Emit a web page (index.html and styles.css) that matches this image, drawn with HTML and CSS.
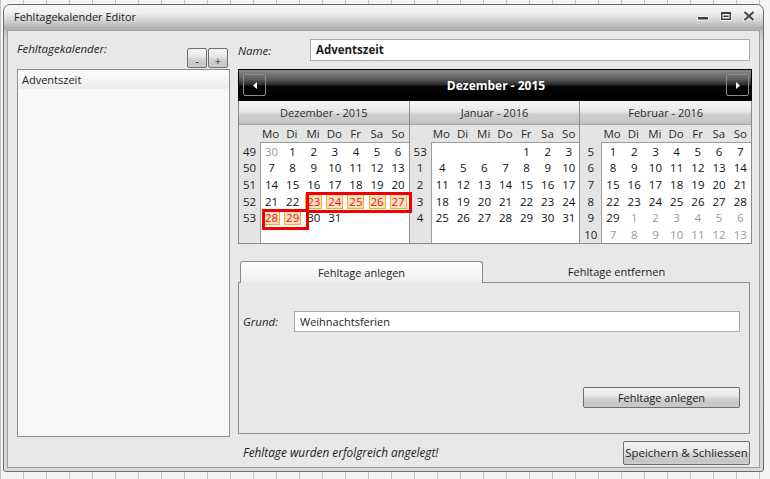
FILE: index.html
```html
<!DOCTYPE html>
<html lang="de">
<head>
<meta charset="utf-8">
<title>Fehltagekalender Editor</title>
<link rel="stylesheet" href="styles.css">
</head>
<body>
<div class="window">
  <div class="titlebar">
    <span class="title">Fehltagekalender Editor</span>
    <div class="controls">
      <svg class="ic-min" width="12" height="10" viewBox="0 0 12 10"><rect x="0.5" y="5.5" width="11" height="3.5" fill="#3e3e3e" stroke="#f2f2f2" stroke-width="1"/></svg>
      <svg class="ic-max" width="12" height="10" viewBox="0 0 12 10"><rect x="0.5" y="0.5" width="11" height="9" fill="#3e3e3e" stroke="#f2f2f2" stroke-width="1"/><rect x="2.5" y="3" width="7" height="4.5" fill="#f4f4f4"/><rect x="3.5" y="4.5" width="5" height="1.5" fill="#3e3e3e"/></svg>
      <svg class="ic-close" width="12" height="10" viewBox="0 0 12 10"><path d="M1.5 1 L10.5 9 M10.5 1 L1.5 9" stroke="#f4f4f4" stroke-width="4" stroke-linecap="round"/><path d="M1.5 1 L10.5 9 M10.5 1 L1.5 9" stroke="#454545" stroke-width="2.2"/></svg>
    </div>
  </div>
  <div class="content">
    <div class="left">
      <div class="left-head">
        <span class="lbl">Fehltagekalender:</span>
        <div class="pm"><button class="btn small">-</button><button class="btn small">+</button></div>
      </div>
      <div class="list"><div class="item">Adventszeit</div></div>
    </div>

    <div class="right">
      <div class="name-row">
        <span class="lbl name-lbl">Name:</span>
        <div class="textbox bold">Adventszeit</div>
      </div>

      <div class="calendar">
        <div class="cal-head">
          <button class="nav"><svg width="4" height="7" viewBox="0 0 4 7"><polygon points="4,0 0,3.5 4,7" fill="#fff"/></svg></button>
          <span class="cal-title">Dezember - 2015</span>
          <button class="nav"><svg width="4" height="7" viewBox="0 0 4 7"><polygon points="0,0 4,3.5 0,7" fill="#fff"/></svg></button>
        </div>
        <div class="months">
          <div class="month">
            <div class="month-head">Dezember - 2015</div>
            <div class="month-body">
              <div class="weeks"><span>49</span><span>50</span><span>51</span><span>52</span><span>53</span><span></span></div>
              <div class="days">
                <div class="dnames"><span>Mo</span><span>Di</span><span>Mi</span><span>Do</span><span>Fr</span><span>Sa</span><span>So</span></div>
                <div class="dates">
                  <span class="g">30</span><span>1</span><span>2</span><span>3</span><span>4</span><span>5</span><span>6</span>
                  <span>7</span><span>8</span><span>9</span><span>10</span><span>11</span><span>12</span><span>13</span>
                  <span>14</span><span>15</span><span>16</span><span>17</span><span>18</span><span>19</span><span>20</span>
                  <span>21</span><span>22</span><span><i class="hl">23</i></span><span><i class="hl">24</i></span><span><i class="hl">25</i></span><span><i class="hl">26</i></span><span><i class="hl">27</i></span>
                  <span><i class="hl">28</i></span><span><i class="hl">29</i></span><span>30</span><span>31</span><span></span><span></span><span></span>
                  <span></span><span></span><span></span><span></span><span></span><span></span><span></span>
                </div>
              </div>
            </div>
          </div>
          <div class="month">
            <div class="month-head">Januar - 2016</div>
            <div class="month-body">
              <div class="weeks"><span>53</span><span>1</span><span>2</span><span>3</span><span>4</span><span></span></div>
              <div class="days">
                <div class="dnames"><span>Mo</span><span>Di</span><span>Mi</span><span>Do</span><span>Fr</span><span>Sa</span><span>So</span></div>
                <div class="dates">
                  <span></span><span></span><span></span><span></span><span>1</span><span>2</span><span>3</span>
                  <span>4</span><span>5</span><span>6</span><span>7</span><span>8</span><span>9</span><span>10</span>
                  <span>11</span><span>12</span><span>13</span><span>14</span><span>15</span><span>16</span><span>17</span>
                  <span>18</span><span>19</span><span>20</span><span>21</span><span>22</span><span>23</span><span>24</span>
                  <span>25</span><span>26</span><span>27</span><span>28</span><span>29</span><span>30</span><span>31</span>
                  <span></span><span></span><span></span><span></span><span></span><span></span><span></span>
                </div>
              </div>
            </div>
          </div>
          <div class="month">
            <div class="month-head">Februar - 2016</div>
            <div class="month-body">
              <div class="weeks"><span>5</span><span>6</span><span>7</span><span>8</span><span>9</span><span>10</span></div>
              <div class="days">
                <div class="dnames"><span>Mo</span><span>Di</span><span>Mi</span><span>Do</span><span>Fr</span><span>Sa</span><span>So</span></div>
                <div class="dates">
                  <span>1</span><span>2</span><span>3</span><span>4</span><span>5</span><span>6</span><span>7</span>
                  <span>8</span><span>9</span><span>10</span><span>11</span><span>12</span><span>13</span><span>14</span>
                  <span>15</span><span>16</span><span>17</span><span>18</span><span>19</span><span>20</span><span>21</span>
                  <span>22</span><span>23</span><span>24</span><span>25</span><span>26</span><span>27</span><span>28</span>
                  <span>29</span><span class="g">1</span><span class="g">2</span><span class="g">3</span><span class="g">4</span><span class="g">5</span><span class="g">6</span>
                  <span class="g">7</span><span class="g">8</span><span class="g">9</span><span class="g">10</span><span class="g">11</span><span class="g">12</span><span class="g">13</span>
                </div>
              </div>
            </div>
          </div>
        </div>
        <div class="mark mark-a"></div>
        <div class="mark mark-b"></div>
      </div>

      <div class="tabs">
        <div class="tab active">Fehltage anlegen</div>
        <div class="tab">Fehltage entfernen</div>
      </div>
      <div class="panel">
        <div class="grund-row">
          <span class="lbl grund-lbl">Grund:</span>
          <div class="textbox">Weihnachtsferien</div>
        </div>
        <div class="panel-actions"><button class="btn wide">Fehltage anlegen</button></div>
      </div>
    </div>

    <div class="footer">
      <span class="status">Fehltage wurden erfolgreich angelegt!</span>
      <button class="btn save">Speichern &amp; Schliessen</button>
    </div>
  </div>
</div>
</body>
</html>
```

FILE: styles.css
```css
* { box-sizing: border-box; }
html, body { margin: 0; }
body {
  width: 770px;
  height: 479px;
  overflow: hidden;
  padding: 4px 6px 7px 3px;
  background-color: #f4f4f4;
  background-image: repeating-linear-gradient(to right, #c2c2c2 0, #c2c2c2 1px, transparent 1px, transparent 23px);
  font-family: "Open Sans", "Noto Sans", sans-serif;
  font-size: 11px;
  color: #1c1c1c;
}
button { font-family: inherit; font-size: inherit; color: inherit; cursor: default; }

.window {
  height: 468px;
  border: 1px solid #6c6c6c;
  border-radius: 7px 7px 3px 3px;
  background: linear-gradient(to bottom, #f8f8f8 0, #efefef 8px, #d2d2d2 16px, #ababab 24px, #c4c4c4 26px, #d8d8d8 36px, #d9d9d9 100%);
  padding: 0 3px 3px 3px;
  display: flex;
  flex-direction: column;
}
.titlebar {
  height: 25px;
  display: flex;
  align-items: center;
  justify-content: space-between;
  padding: 0 5px 0 7px;
}
.title { font-size: 11px; color: #1a1a1a; margin-top: -2px; }
.controls { display: flex; align-items: center; gap: 11px; margin-top: -3px; }
.controls svg { display: block; }

.content {
  flex: 1;
  border: 1px solid #9c9c9c;
  background: #e8e8e8;
  display: grid;
  grid-template-columns: 213px 1fr;
  grid-template-rows: 1fr 24px;
  column-gap: 8px;
  row-gap: 4px;
  padding: 8px 7px 2px 9px;
}
.lbl { font-style: italic; color: #222; font-size: 11.5px; }

.left { display: flex; flex-direction: column; min-height: 0; }
.left-head {
  height: 30px;
  display: flex;
  justify-content: space-between;
  align-items: flex-start;
}
.left-head .lbl { line-height: 20px; }
.pm { display: flex; gap: 1px; align-self: flex-end; margin-right: 2px; margin-bottom: 1px; }
.btn {
  border: 1px solid #6e6e6e;
  border-radius: 2px;
  background: linear-gradient(to bottom, #f3f3f3 0%, #e9e9e9 40%, #d4d4d4 55%, #c5c5c5 85%, #cdcdcd 100%);
  padding: 0;
  line-height: 1;
}
.btn.small { width: 20px; height: 20px; font-size: 11px; padding-top: 5px; }
.list {
  flex: 1;
  border: 1px solid #8d8d8d;
  background: #f7f7f7;
  padding: 1px;
}
.item {
  height: 18px;
  line-height: 18px;
  padding-left: 3px;
  background: linear-gradient(to bottom, #fcfcfc, #ececec);
}

.right { display: flex; flex-direction: column; min-height: 0; padding-bottom: 3px; }
.name-row { display: flex; align-items: center; height: 22px; margin-bottom: 8px; }
.name-lbl { width: 72px; }
.textbox {
  flex: 1;
  height: 22px;
  border: 1px solid #a9abb0;
  background: #fff;
  padding: 0 5px;
  line-height: 20px;
  margin-right: 2px;
}
.bold { font-weight: 700; font-size: 11.5px; }

.calendar { position: relative; height: 175px; margin-bottom: 17px; }
.cal-head {
  height: 32px;
  border: 1px solid #000;
  background: linear-gradient(to bottom, #8a8a8a 0%, #5e5e5e 30%, #2c2c2c 48%, #050505 55%, #000 100%);
  display: flex;
  align-items: center;
  justify-content: space-between;
  padding: 0 2px 0 4px;
}
.cal-title { color: #fff; font-weight: 700; font-size: 12px; }
.nav {
  width: 23px;
  height: 22px;
  border: 1px solid #8c8c8c;
  border-radius: 2px;
  background: transparent;
  display: flex;
  align-items: center;
  justify-content: center;
  padding: 0;
}
.nav svg { display: block; }
.months {
  height: 143px;
  display: grid;
  grid-template-columns: repeat(3, 1fr);
  border: 1px solid #8a8a8a;
  border-top: none;
}
.month { display: flex; flex-direction: column; border-right: 1px solid #8e8e8e; min-width: 0; }
.month:last-child { border-right: none; }
.month-head {
  height: 24px;
  text-align: center;
  line-height: 23px;
  color: #2a2a2a;
  background: linear-gradient(to bottom, #f7f7f7 0%, #e6e6e6 45%, #cfcfcf 55%, #c4c4c4 92%, #9c9c9c 100%);
}
.month-body { flex: 1; display: flex; background: #e4e4e4; font-size: 11.5px; }
.weeks {
  width: 21px;
  display: grid;
  grid-template-rows: repeat(6, 1fr);
  padding-top: 18px;
  text-align: center;
  line-height: 1;
  color: #1c1c1c;
}
.weeks span, .dates span, .dnames span { display: flex; align-items: center; justify-content: center; }
.days { flex: 1; display: flex; flex-direction: column; }
.dnames { height: 17px; display: grid; grid-template-columns: repeat(7, 1fr); color: #2a2a2a; }
.dates {
  flex: 1;
  display: grid;
  grid-template-columns: repeat(7, 1fr);
  grid-template-rows: repeat(6, 1fr);
  background: #fff;
  border-top: 1px solid #9c9c9c;
  border-left: 1px solid #9c9c9c;
  color: #111;
}
.dates .g { color: #9a9a9a; }
.hl {
  font-style: normal;
  display: inline-block;
  width: 17px;
  height: 15px;
  line-height: 13px;
  text-align: center;
  border: 1px solid #f2ae2e;
  background: #fcdfbd;
  color: #e3170f;
}
.mark { position: absolute; border: 3px solid #f00000; }
.mark-a { left: 68px; top: 123px; width: 106px; height: 21px; }
.mark-b { left: 24px; top: 140px; width: 47px; height: 21px; }

.tabs { display: flex; height: 22px; padding-left: 2px; margin-right: 2px; position: relative; z-index: 1; margin-bottom: -1px; }
.tab { text-align: center; line-height: 21px; }
.tab.active {
  width: 243px;
  border: 1px solid #8c8c8c;
  border-bottom: none;
  border-radius: 3px 3px 0 0;
  background: linear-gradient(to bottom, #ffffff, #f1f1f1 80%, #ebebeb);
}
.tab:not(.active) { flex: 1; }
.panel {
  flex: 1;
  border: 1px solid #8c8c8c;
  margin-right: 2px;
  padding: 28px 9px 0 4px;
  background: #e8e8e8;
}
.grund-row { display: flex; align-items: center; height: 21px; }
.grund-lbl { width: 51px; }
.grund-row .textbox { height: 21px; line-height: 19px; margin-right: 0; }
.panel-actions { display: flex; justify-content: flex-end; margin-top: 55px; }
.btn.wide { width: 157px; height: 21px; }

.footer {
  grid-column: 2;
  display: flex;
  align-items: center;
  justify-content: space-between;
  padding-left: 5px;
}
.status { font-style: italic; margin-top: -2px; font-size: 11.8px; }
.btn.save { width: 127px; height: 24px; margin-right: 2px; font-size: 11.4px; }
```
